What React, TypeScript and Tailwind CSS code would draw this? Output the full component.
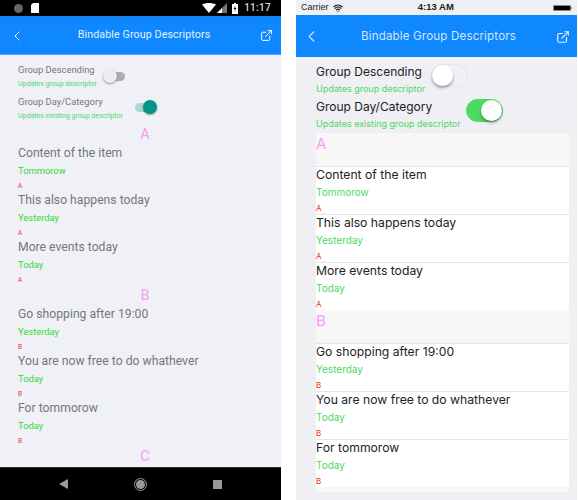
import { ExternalLink, ChevronLeft, Wifi } from 'lucide-react';

const androidFont = { fontFamily: 'Roboto, sans-serif' };
const iosFont = { fontFamily: 'Inter, sans-serif' };

const groups = [
    {
        key: 'A',
        items: [
            { title: 'Content of the item', day: 'Tommorow' },
            { title: 'This also happens today', day: 'Yesterday' },
            { title: 'More events today', day: 'Today' },
        ],
    },
    {
        key: 'B',
        items: [
            { title: 'Go shopping after 19:00', day: 'Yesterday' },
            { title: 'You are now free to do whathever', day: 'Today' },
            { title: 'For tommorow', day: 'Today' },
        ],
    },
];

function AndroidStatusBar() {
    return (
        <div className="flex h-4 shrink-0 items-center justify-between bg-black pr-[10px] pl-[14px]">
            <div className="flex items-center gap-[8px]">
                <span className="h-[9px] w-[9px] rounded-full bg-[#666]" />
                <svg width="8" height="10" viewBox="0 0 8 10">
                    <path d="M2 0h6v10H0V2z" fill="#fff" />
                </svg>
            </div>
            <div className="flex items-center text-[#ddd]">
                <svg width="14" height="10" viewBox="0 0 14 10">
                    <path d="M0 1.5C4 -0.5 10 -0.5 14 1.5L7 10z" fill="#fff" />
                </svg>
                <svg className="ml-[1px]" width="10" height="10" viewBox="0 0 10 10">
                    <path d="M10 0v10H0z" fill="#777" />
                    <path d="M5 5v5H0z" fill="#fff" />
                </svg>
                <svg className="ml-[5px]" width="6" height="11" viewBox="0 0 6 11">
                    <path d="M2 0h2v1h2v10H0V1h2z" fill="#fff" />
                    <path d="M3.4 2.5 1.6 6h1.2l-.3 2.5L4.4 5H3.1z" fill="#000" />
                </svg>
                <span className="ml-[6px] text-[10px] leading-none font-medium tracking-[0.3px]">11:17</span>
            </div>
        </div>
    );
}

function AndroidSwitch({ on, className }: { on: boolean; className: string }) {
    return (
        <div className={`relative h-[9px] w-[21px] rounded-full ${on ? 'bg-[#a9d9d5]' : 'bg-[#adadad]'} ${className}`}>
            <span
                className={`absolute top-[-3px] h-[14px] w-[14px] rounded-full shadow-[0_1px_2px_rgba(0,0,0,0.4)] ${
                    on ? 'right-[-1px] bg-[#009688]' : 'left-[-1px] bg-[#ececec]'
                }`}
            />
        </div>
    );
}

function AndroidPhone() {
    return (
        <div className="flex h-[500px] w-[281px] shrink-0 flex-col bg-[#f0f1f6]" style={androidFont}>
            <AndroidStatusBar />
            <div className="flex h-[39px] shrink-0 items-center justify-between border-t border-b border-[#1e7fe0] border-b-[#4da3ff] bg-[#0f87ff] pr-[8px] pl-[9px] text-white">
                <ChevronLeft size={16} strokeWidth={1.5} />
                <span className="ml-[3px] text-[10.7px] tracking-[0.1px] text-[#e4f1ff]">Bindable Group Descriptors</span>
                <ExternalLink size={13} strokeWidth={1.8} />
            </div>
            <div className="min-h-0 flex-1 overflow-hidden pt-[8px]">
                <div className="pl-[18px]">
                    <div className="flex h-[32px] items-start">
                        <div>
                            <div className="text-[9.4px] leading-[13px] text-[#777]">Group Descending</div>
                            <div className="mt-[3px] text-[7px] leading-[10px] text-[#4cd964]">Updates group descriptor</div>
                        </div>
                        <AndroidSwitch on={false} className="mt-[9px] ml-[7px]" />
                    </div>
                    <div className="flex h-[32px] items-start">
                        <div>
                            <div className="text-[9.4px] leading-[13px] text-[#777]">Group Day/Category</div>
                            <div className="mt-[3px] text-[7px] leading-[10px] text-[#4cd964]">Updates existing group descriptor</div>
                        </div>
                        <AndroidSwitch on className="mt-[8px] ml-[12px]" />
                    </div>
                </div>
                {groups.map((group) => (
                    <div key={group.key} className="pb-[3px]">
                        <div className="h-[17px] pl-[9px] text-center text-[14.5px] leading-[16px] text-[#f79cf2]">{group.key}</div>
                        {group.items.map((item) => (
                            <div key={item.title} className="h-[47px] pl-[18px]">
                                <div className="text-[12.2px] leading-[18px] text-[#777]">{item.title}</div>
                                <div className="text-[9.4px] leading-[18px] text-[#33d933]">{item.day}</div>
                                <div className="mt-[1px] text-[6.5px] leading-[11px] text-[#ff3030]">{group.key}</div>
                            </div>
                        ))}
                    </div>
                ))}
                <div className="pl-[9px] text-center text-[14.5px] leading-[16px] text-[#f79cf2]">C</div>
            </div>
            <div className="flex h-[33px] shrink-0 items-center justify-between border-t border-[#333] bg-black pr-[59px] pl-[59px]">
                <svg width="9" height="10" viewBox="0 0 9 10">
                    <path d="M9 0v10L0 5z" fill="#999" />
                </svg>
                <span className="flex h-[13px] w-[13px] items-center justify-center rounded-full border border-[#999]">
                    <span className="h-[9px] w-[9px] rounded-full bg-[#999]" />
                </span>
                <span className="h-[9px] w-[9px] bg-[#999]" />
            </div>
        </div>
    );
}

function IosSwitch({ on, className }: { on: boolean; className: string }) {
    return (
        <div
            className={`relative h-[23px] w-[37px] rounded-full border ${
                on ? 'border-[#4cd964] bg-[#4cd964]' : 'border-[#e6e6e9] bg-[#f0f0f4]'
            } ${className}`}
        >
            <span
                className={`absolute top-0 h-[21px] w-[21px] rounded-full bg-white shadow-[0_2px_3px_rgba(0,0,0,0.35)] ${
                    on ? 'right-0' : 'left-0'
                }`}
            />
        </div>
    );
}

function IosPhone() {
    return (
        <div className="flex h-[500px] w-[281px] shrink-0 flex-col bg-[#efeff4]" style={iosFont}>
            <div className="relative flex h-[15px] shrink-0 items-center justify-between pr-[5px] pl-[5px] text-[#222]" style={{ fontFamily: 'Liberation Sans, sans-serif' }}>
                <div className="flex items-center gap-[4px]">
                    <span className="text-[9px]">Carrier</span>
                    <Wifi size={10} strokeWidth={3} />
                </div>
                <span className="mr-[24px] text-[9.5px] font-bold">4:13 AM</span>
                <div className="flex items-center">
                    <span className="h-[6px] w-[18px] rounded-[1px] border border-[#888] bg-black" />
                    <span className="h-[2px] w-[1px] bg-[#888]" />
                </div>
            </div>
            <div className="flex h-[42px] shrink-0 items-center justify-between bg-[#0f87ff] pt-[1px] pr-[7px] pl-[6px]">
                <ChevronLeft size={19} strokeWidth={1.4} className="text-[#cfe6ff]" />
                <span className="text-[11.6px] tracking-[0.15px] text-[#cfe6ff]">Bindable Group Descriptors</span>
                <ExternalLink size={14} strokeWidth={2} className="text-[#e6f2ff]" />
            </div>
            <div className="mb-[8px] min-h-0 flex-1 overflow-hidden pt-[6px] pr-[8px] pl-[20px]">
                <div className="flex h-[35px] items-start">
                    <div>
                        <div className="text-[12px] leading-[18px] text-[#222]">Group Descending</div>
                        <div className="mt-[2px] text-[9px] leading-[12px] text-[#4cd964]">Updates group descriptor</div>
                    </div>
                    <IosSwitch on={false} className="mt-[1px] ml-[6px]" />
                </div>
                <div className="flex h-[35px] items-start">
                    <div>
                        <div className="text-[12px] leading-[18px] text-[#222]">Group Day/Category</div>
                        <div className="mt-[2px] text-[9px] leading-[12px] text-[#4cd964]">Updates existing group descriptor</div>
                    </div>
                    <IosSwitch on className="mt-[1px] ml-[5px]" />
                </div>
                {groups.map((group) => (
                    <div key={group.key}>
                        <div className="h-[33px] bg-[#f7f7f7] text-[15px] leading-[21px] text-[#f79cf2]">{group.key}</div>
                        {group.items.map((item) => (
                            <div key={item.title} className="h-[48px] border-t border-[#e6e6ea] bg-white">
                                <div className="text-[12.2px] leading-[15px] text-[#222]">{item.title}</div>
                                <div className="mt-[3px] text-[10px] leading-[15px] text-[#4cd964]">{item.day}</div>
                                <div className="mt-[2px] text-[8px] leading-[12px] text-[#ff2020]">{group.key}</div>
                            </div>
                        ))}
                    </div>
                ))}
                <div className="h-[33px] bg-[#f7f7f7] pt-[1px] text-[15px] leading-[21px] text-[#f79cf2]">C</div>
            </div>
        </div>
    );
}

export default function App() {
    return (
        <div className="flex h-[500px] w-[578px] gap-[15px] overflow-hidden bg-white">
            <AndroidPhone />
            <IosPhone />
        </div>
    );
}
